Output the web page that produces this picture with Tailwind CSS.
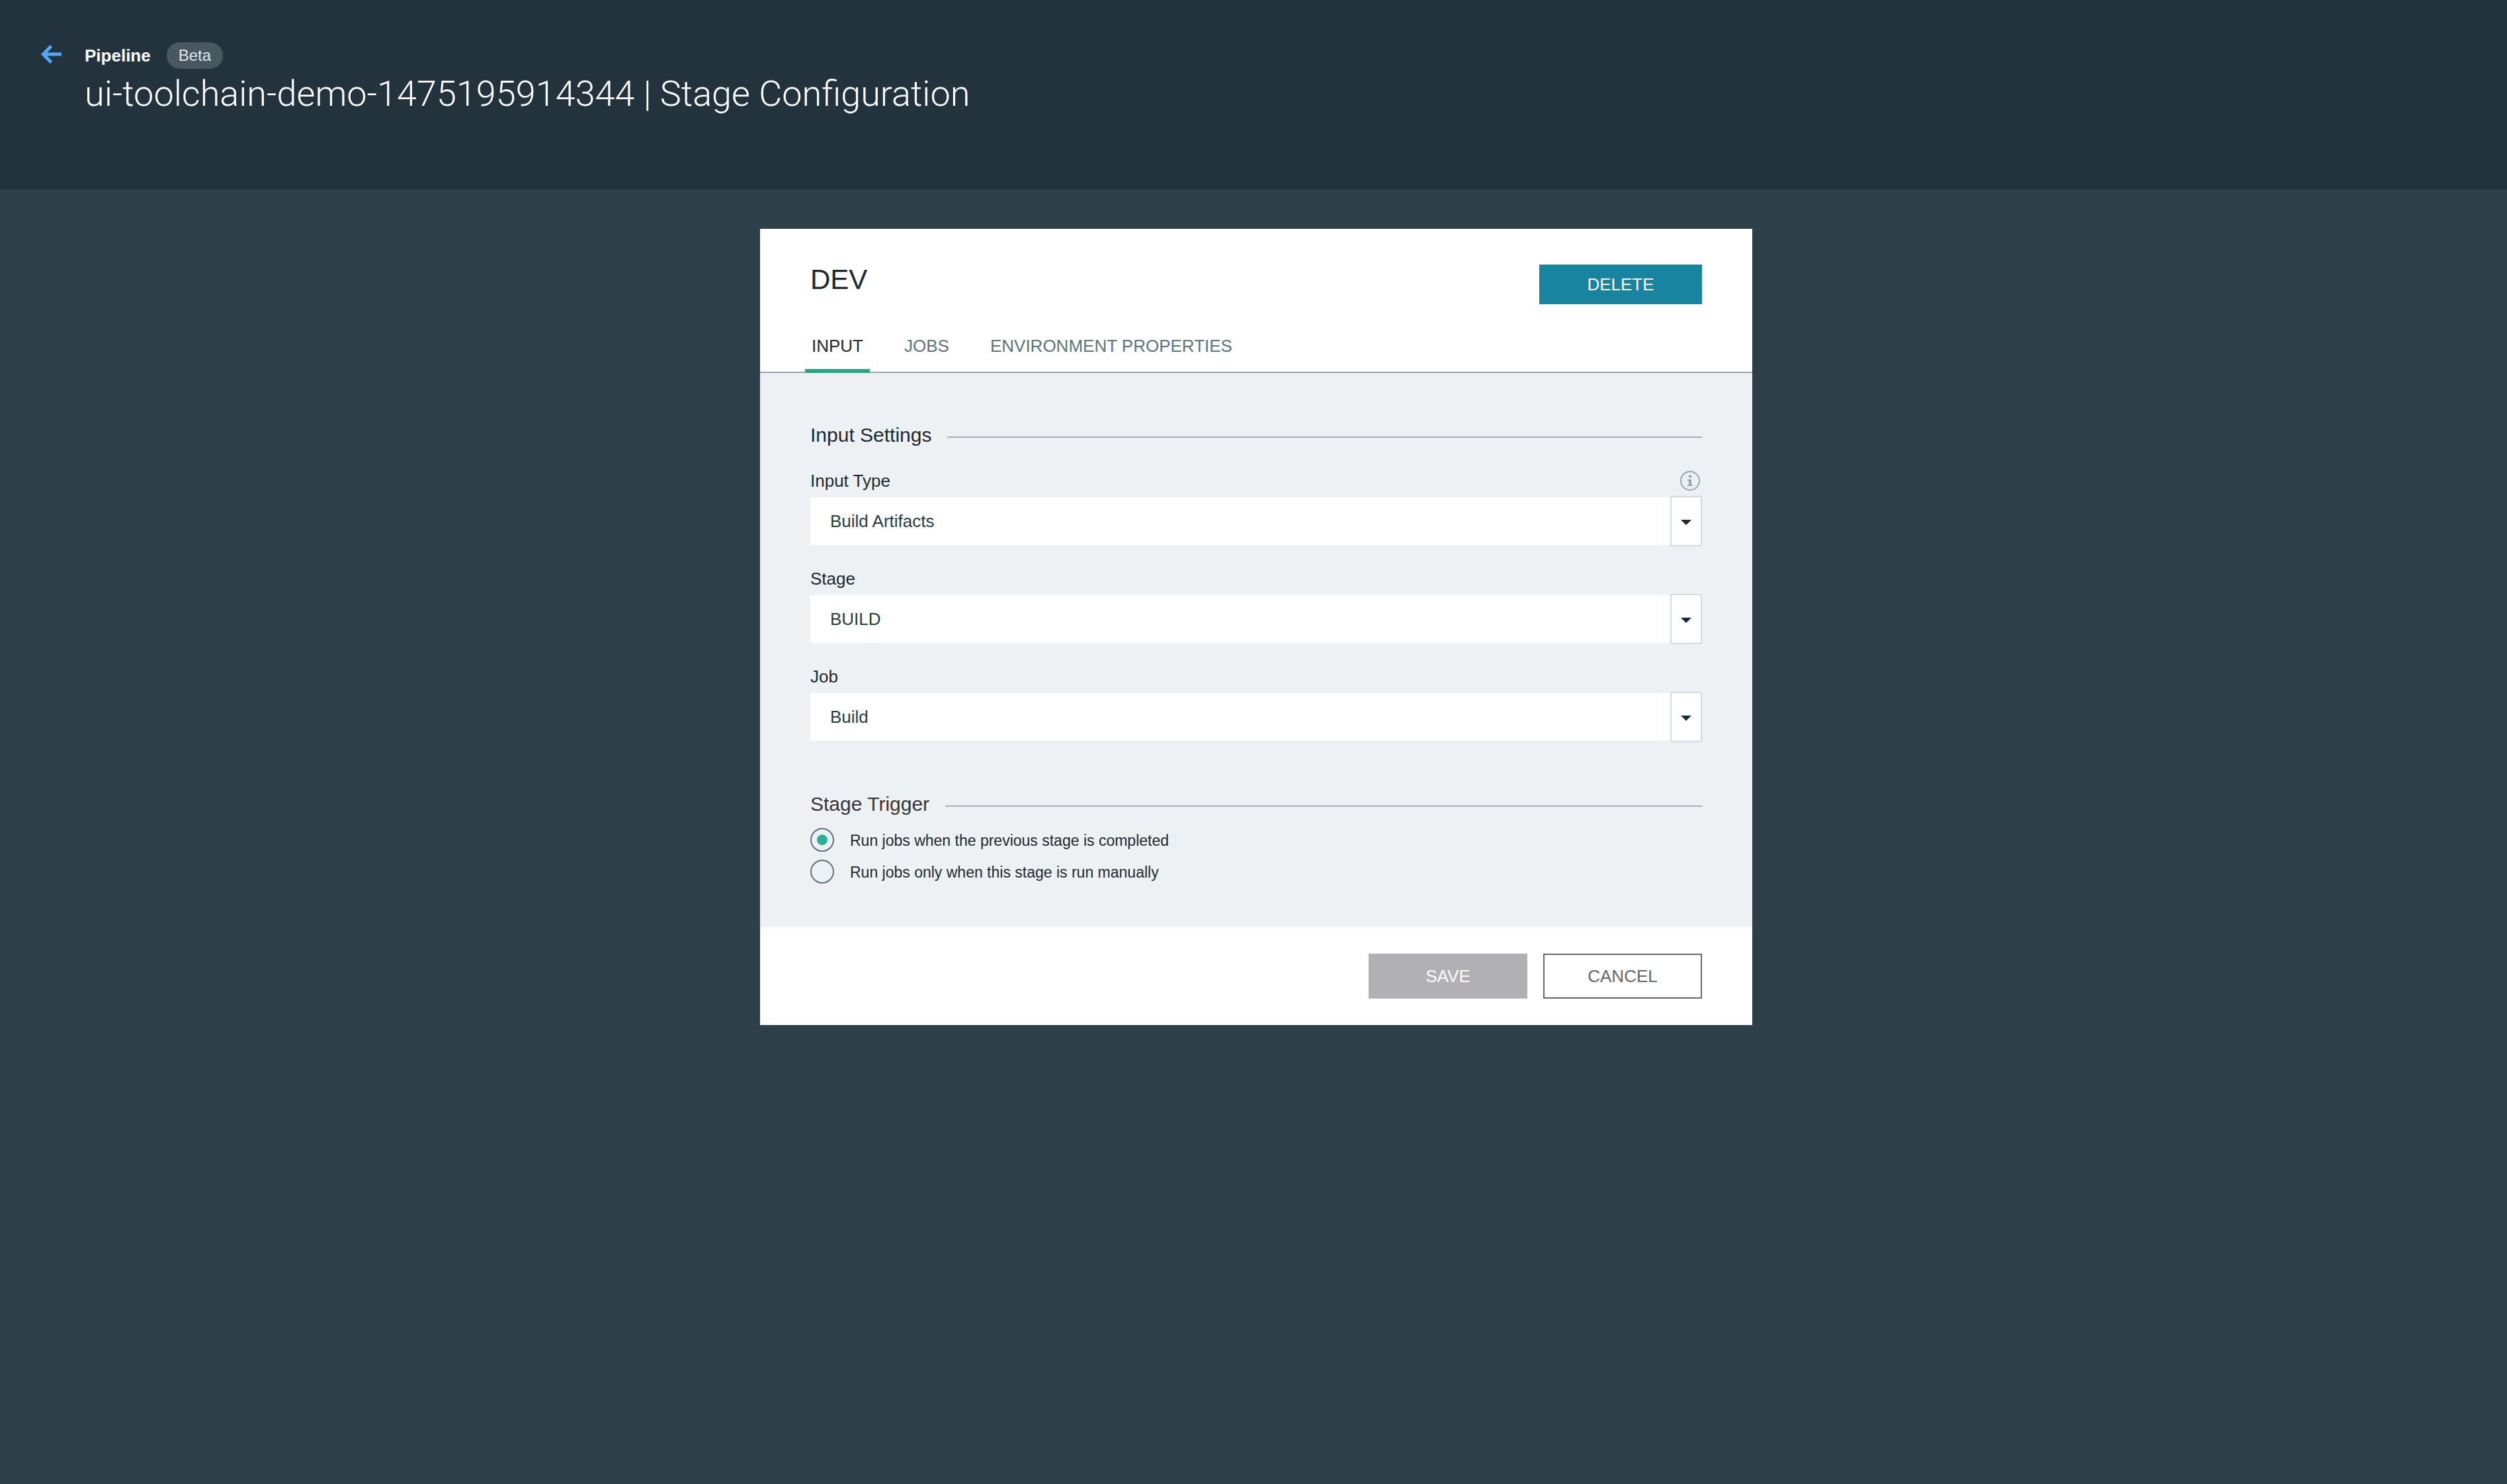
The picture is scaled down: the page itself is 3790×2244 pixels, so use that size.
<!DOCTYPE html>
<html lang="en">
<head>
<meta charset="utf-8">
<meta name="viewport" content="width=device-width, initial-scale=1">
<title>Pipeline | Stage Configuration</title>
<script src="https://cdn.jsdelivr.net/npm/@tailwindcss/browser@4"></script>
</head>
<body class="min-h-screen bg-[#2d3f49] font-['Liberation_Sans',Arial,sans-serif] text-[26px] text-[#1d2932]">

<header class="flex gap-[34px] bg-[#22333d] px-[62px] pt-16 pb-[112px] text-white">
  <a href="#" aria-label="Back" class="flex h-9 shrink-0 items-center">
    <svg class="h-7 w-8" viewBox="0 0 32 28" fill="none" stroke="#52a6f7" stroke-width="5" aria-hidden="true">
      <path d="M15.500 1.500L3.500 14L15.500 26.500M3 14H31"/>
    </svg>
  </a>
  <div>
    <div class="flex h-10 items-center gap-6">
      <span class="font-bold">Pipeline</span>
      <span class="rounded-full bg-[#485861] px-[18px] text-[24px] leading-10 text-[#dfe6eb]">Beta</span>
    </div>
    <h1 class="mt-1.5 font-['Roboto',sans-serif] text-[54px] leading-[64px] font-light">ui-toolchain-demo-1475195914344 | Stage Configuration</h1>
  </div>
</header>

<main class="pt-[60px] pl-2">
  <form class="mx-auto w-full max-w-[1500px] bg-white">
    <div class="flex items-start justify-between px-[76px] pt-[54px]">
      <h2 class="text-[42px] leading-[46px]">DEV</h2>
      <button type="button" class="h-[60px] w-[246px] bg-[#19849f] text-white">DELETE</button>
    </div>

    <nav class="mt-[46px] flex gap-[42px] border-b-2 border-[#98a6ab] px-[68px] leading-[34px] text-[#5a757c]">
      <a href="#" aria-current="page" class="-mb-0.5 border-b-6 border-[#2ba585] px-2.5 pb-[18px] text-[#1d2932]">INPUT</a>
      <a href="#" class="px-2.5">JOBS</a>
      <a href="#" class="px-2.5">ENVIRONMENT PROPERTIES</a>
    </nav>

    <div class="bg-[#edf1f4] px-[76px] pt-[74px] pb-[66px]">
      <section>
        <div class="flex items-center gap-6">
          <h3 class="text-[30px] leading-10">Input Settings</h3>
          <div class="mt-1.5 h-0.5 flex-1 bg-[#a5b2b8]"></div>
        </div>

        <div class="mt-8 flex flex-col gap-8">
          <div>
            <div class="flex h-[34px] items-center justify-between">
              <label for="input-type">Input Type</label>
              <button type="button" aria-label="About input types" class="mr-[3px]">
                <svg class="size-[30px]" viewBox="0 0 30 30" aria-hidden="true">
                  <circle cx="15" cy="15" r="14" fill="none" stroke="#98a6b0" stroke-width="2"/>
                  <circle cx="15" cy="8.500" r="2.200" fill="#98a6b0"/>
                  <path d="M11 13h6v8h2v2h-8v-2h2v-6h-2z" fill="#98a6b0"/>
                </svg>
              </button>
            </div>
            <div class="mt-1.5 grid grid-cols-[1fr_48px] items-center">
              <select id="input-type" class="col-span-full row-start-1 h-[72px] appearance-none rounded-none bg-white px-[30px] text-[#263c46]"><option>Build Artifacts</option></select>
              <span class="pointer-events-none col-start-2 row-start-1 flex h-[76px] items-center justify-center border-2 border-[#d5d9e0] bg-white">
                <svg class="mt-1 h-2 w-4" viewBox="0 0 16 8" fill="#1d2932" aria-hidden="true"><path d="M0 0H16L8 8z"/></svg>
              </span>
            </div>
          </div>

          <div>
            <div class="flex h-[34px] items-center">
              <label for="stage">Stage</label>
            </div>
            <div class="mt-1.5 grid grid-cols-[1fr_48px] items-center">
              <select id="stage" class="col-span-full row-start-1 h-[72px] appearance-none rounded-none bg-white px-[30px] text-[#263c46]"><option>BUILD</option></select>
              <span class="pointer-events-none col-start-2 row-start-1 flex h-[76px] items-center justify-center border-2 border-[#d5d9e0] bg-white">
                <svg class="mt-1 h-2 w-4" viewBox="0 0 16 8" fill="#1d2932" aria-hidden="true"><path d="M0 0H16L8 8z"/></svg>
              </span>
            </div>
          </div>

          <div>
            <div class="flex h-[34px] items-center">
              <label for="job">Job</label>
            </div>
            <div class="mt-1.5 grid grid-cols-[1fr_48px] items-center">
              <select id="job" class="col-span-full row-start-1 h-[72px] appearance-none rounded-none bg-white px-[30px] text-[#263c46]"><option>Build</option></select>
              <span class="pointer-events-none col-start-2 row-start-1 flex h-[76px] items-center justify-center border-2 border-[#d5d9e0] bg-white">
                <svg class="mt-1 h-2 w-4" viewBox="0 0 16 8" fill="#1d2932" aria-hidden="true"><path d="M0 0H16L8 8z"/></svg>
              </span>
            </div>
          </div>
        </div>
      </section>

      <section class="mt-[74px]">
        <div class="flex items-center gap-6">
          <h3 class="text-[30px] leading-10 text-[#383635]">Stage Trigger</h3>
          <div class="mt-1.5 h-0.5 flex-1 bg-[#a5b2b8]"></div>
        </div>
        <div class="mt-4 flex flex-col gap-3 text-[23px] leading-8">
          <div class="flex items-center gap-6">
            <input id="trigger-auto" type="radio" name="trigger" checked class="size-9 appearance-none rounded-full border-2 border-[#5a757c] bg-clip-content p-2 checked:bg-[#2ab299]">
            <label for="trigger-auto" class="pt-0.5">Run jobs when the previous stage is completed</label>
          </div>
          <div class="flex items-center gap-6">
            <input id="trigger-manual" type="radio" name="trigger" class="size-9 appearance-none rounded-full border-2 border-[#5a757c] bg-clip-content p-2 checked:bg-[#2ab299]">
            <label for="trigger-manual" class="pt-0.5">Run jobs only when this stage is run manually</label>
          </div>
        </div>
      </section>
    </div>

    <div class="flex justify-end gap-6 px-[76px] py-10">
      <button type="submit" disabled class="h-[68px] w-60 bg-[#b1b1b3] text-white">SAVE</button>
      <button type="button" class="h-[68px] w-60 border-2 border-[#65666a] bg-white text-[#65666a]">CANCEL</button>
    </div>
  </form>
</main>
</body>
</html>
